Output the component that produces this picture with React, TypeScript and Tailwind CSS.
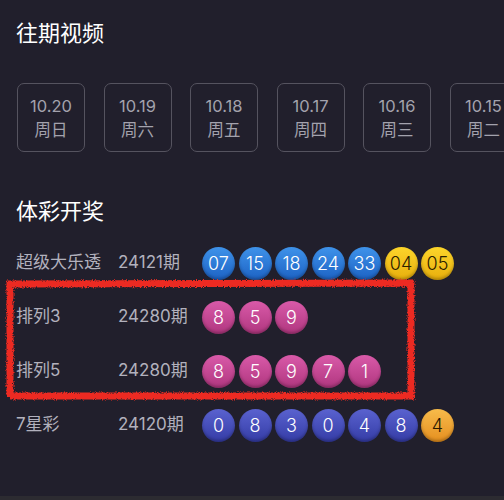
import React from 'react'

const dates = [
  { d: '10.20', w: '周日' },
  { d: '10.19', w: '周六' },
  { d: '10.18', w: '周五' },
  { d: '10.17', w: '周四' },
  { d: '10.16', w: '周三' },
  { d: '10.15', w: '周二' },
]

type Ball = { n: string; c: 'blue' | 'yellow' | 'pink' | 'indigo' | 'orange' }

const ballClass: Record<Ball['c'], string> = {
  blue: 'bg-linear-to-b from-[#3f93ea] to-[#1d62c4] text-white',
  yellow: 'bg-linear-to-b from-[#fcd52a] to-[#e8af0a] text-[#2a2000]',
  pink: 'bg-linear-to-b from-[#d95aa9] to-[#b0367f] text-white',
  indigo: 'bg-linear-to-b from-[#5a62cf] to-[#353ca6] text-white',
  orange: 'bg-linear-to-b from-[#f7bb4a] to-[#e58f1d] text-[#2a1800]',
}

const rows: { name: string; period: string; balls: Ball[] }[] = [
  {
    name: '超级大乐透',
    period: '24121期',
    balls: [
      { n: '07', c: 'blue' },
      { n: '15', c: 'blue' },
      { n: '18', c: 'blue' },
      { n: '24', c: 'blue' },
      { n: '33', c: 'blue' },
      { n: '04', c: 'yellow' },
      { n: '05', c: 'yellow' },
    ],
  },
  {
    name: '排列3',
    period: '24280期',
    balls: ['8', '5', '9'].map((n) => ({ n, c: 'pink' as const })),
  },
  {
    name: '排列5',
    period: '24280期',
    balls: ['8', '5', '9', '7', '1'].map((n) => ({ n, c: 'pink' as const })),
  },
  {
    name: '7星彩',
    period: '24120期',
    balls: [
      ...['0', '8', '3', '0', '4', '8'].map((n) => ({ n, c: 'indigo' as const })),
      { n: '4', c: 'orange' },
    ],
  },
]

export default function App() {
  return (
    <div
      className="relative flex h-[500px] w-[504px] flex-col overflow-hidden bg-[#211f2c]"
      style={{ fontFamily: 'Inter, "Noto Sans CJK SC", sans-serif' }}
    >
      <h1 className="pl-4 pt-[17px] text-[22px] leading-[32px] text-white">往期视频</h1>

      <div className="mt-[34px] flex gap-[18.5px] pl-[17px]">
        {dates.map((x) => (
          <div
            key={x.d}
            className="flex h-[69px] w-[68px] shrink-0 flex-col items-center justify-center rounded-[7px] border-[1.5px] border-[#55535f] text-[16.5px] leading-[24px] text-[#a3a2ad]"
          >
            <span>{x.d}</span>
            <span>{x.w}</span>
          </div>
        ))}
      </div>

      <h2 className="mt-[43px] pl-4 text-[22px] leading-[32px] text-white">体彩开奖</h2>

      <div className="mt-[9px] flex flex-col">
        {rows.map((r) => (
          <div key={r.name} className="flex h-[54px] items-center pl-4 text-[17px] text-[#b2b1bd]">
            <span className="w-[102px]">{r.name}</span>
            <span className="w-[84px]">{r.period}</span>
            <div className="flex gap-[3.5px]">
              {r.balls.map((b, i) => (
                <span
                  key={i}
                  className={`flex h-[33px] w-[33px] items-center justify-center rounded-full text-[18px] font-light shadow-[inset_0_-2px_3px_rgba(0,0,0,0.25)] ${ballClass[b.c]}`}
                >
                  {b.n}
                </span>
              ))}
            </div>
          </div>
        ))}
      </div>

      <div className="mt-auto h-[4px] bg-[#2c2b31]" />

      {/* hand drawn red marker frame */}
      <svg className="pointer-events-none absolute left-0 top-0" width="504" height="500">
        <defs>
          <filter id="rough">
            <feTurbulence type="fractalNoise" baseFrequency="0.9" numOctaves="2" seed="3" />
            <feDisplacementMap in="SourceGraphic" scale="4" />
          </filter>
        </defs>
        <path
          d="M10 397 L10 284 L411 283 L411 396 L10 396"
          fill="none"
          stroke="#ec2a20"
          strokeWidth="7"
          strokeLinejoin="miter"
          filter="url(#rough)"
        />
      </svg>
    </div>
  )
}
